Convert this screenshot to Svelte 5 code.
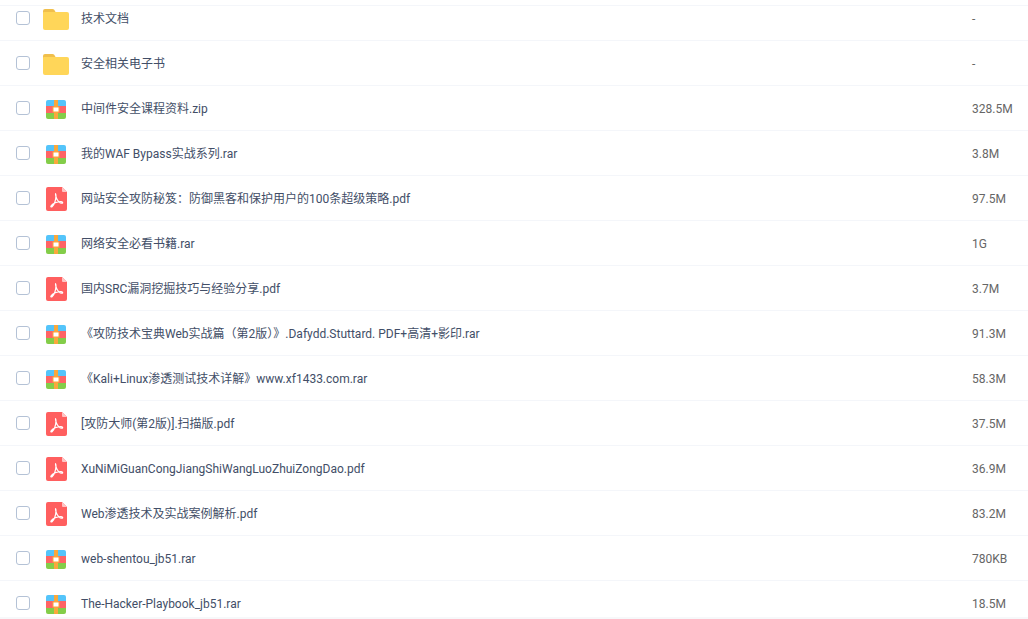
<script>
  const files = [
    { name: '技术文档', size: '-', type: 'folder' },
    { name: '安全相关电子书', size: '-', type: 'folder' },
    { name: '中间件安全课程资料.zip', size: '328.5M', type: 'zip' },
    { name: '我的WAF Bypass实战系列.rar', size: '3.8M', type: 'zip' },
    { name: '网站安全攻防秘笈：防御黑客和保护用户的100条超级策略.pdf', size: '97.5M', type: 'pdf' },
    { name: '网络安全必看书籍.rar', size: '1G', type: 'zip' },
    { name: '国内SRC漏洞挖掘技巧与经验分享.pdf', size: '3.7M', type: 'pdf' },
    { name: '《攻防技术宝典Web实战篇（第2版）》.Dafydd.Stuttard. PDF+高清+影印.rar', size: '91.3M', type: 'zip' },
    { name: '《Kali+Linux渗透测试技术详解》www.xf1433.com.rar', size: '58.3M', type: 'zip' },
    { name: '[攻防大师(第2版)].扫描版.pdf', size: '37.5M', type: 'pdf' },
    { name: 'XuNiMiGuanCongJiangShiWangLuoZhuiZongDao.pdf', size: '36.9M', type: 'pdf' },
    { name: 'Web渗透技术及实战案例解析.pdf', size: '83.2M', type: 'pdf' },
    { name: 'web-shentou_jb51.rar', size: '780KB', type: 'zip' },
    { name: 'The-Hacker-Playbook_jb51.rar', size: '18.5M', type: 'zip' }
  ];
</script>

<div class="page">
  <div class="top-edge"></div>
  <ul class="list">
    {#each files as file}
      <li class="row">
        <span class="check"></span>
        <span class="icon {file.type}">
          {#if file.type === 'folder'}
            <svg width="26" height="21" viewBox="0 0 26 21">
              <path d="M0 2a2 2 0 0 1 2-2h7a3 3 0 0 1 3 2l.5 1H12v2H0z" fill="#f0bf4c" />
              <path d="M0 4a1 1 0 0 1 1-1h23a2 2 0 0 1 2 2v14a2 2 0 0 1-2 2H2a2 2 0 0 1-2-2z" fill="#ffd659" />
            </svg>
          {:else if file.type === 'zip'}
            <svg width="20" height="19" viewBox="0 0 20 19">
              <path d="M0 6V2a2 2 0 0 1 2-2h16a2 2 0 0 1 2 2v4z" fill="#54c4fa" />
              <rect x="0" y="6" width="20" height="7" fill="#ff6464" />
              <path d="M0 13h20v4a2 2 0 0 1-2 2H2a2 2 0 0 1-2-2z" fill="#83cd49" />
              <rect x="8" y="0" width="4" height="19" fill="#f9a83c" />
              <rect x="7" y="7" width="6" height="5" fill="#fff" stroke="#f9a83c" stroke-width="1" />
            </svg>
          {:else}
            <svg width="21" height="24" viewBox="0 0 21 24">
              <path d="M2 0h14l5 5v17a2 2 0 0 1-2 2H2a2 2 0 0 1-2-2V2a2 2 0 0 1 2-2z" fill="#ff5f5f" />
              <path d="M16 0l5 5h-4a1 1 0 0 1-1-1z" fill="#ffc4c4" />
              <path d="M10 6.500c-.8 0-.5 2.800 1 5.800 1.300 2.500 3.400 4.100 5 3.900 1.200-.2.700-1.500-1.200-1.500-3 0-8.300 1.300-9.800 4.300-.5 1 .5 1.200 1.200.5 2.100-2.100 3.600-5.900 3.800-10.600 0-1.400-.1-2.400-.6-2.400z" fill="none" stroke="#fff" stroke-width="1.200" />
            </svg>
          {/if}
        </span>
        <span class="name">{file.name}</span>
        <span class="size">{file.size}</span>
      </li>
    {/each}
  </ul>
  <div class="bottom-edge"></div>
</div>

<style>
  :global(body) {
    margin: 0;
    background: #fff;
  }

  .page {
    position: relative;
    height: 619px;
    overflow: hidden;
    font-family: Roboto, "Noto Sans CJK SC", sans-serif;
    font-size: 12px;
    line-height: 20px;
  }

  .top-edge {
    position: absolute;
    top: 0;
    left: 0;
    right: 0;
    height: 5px;
    background: #fff;
    border-bottom: 1px solid #f4f6fa;
    z-index: 1;
  }

  .bottom-edge {
    position: absolute;
    top: 617px;
    left: 0;
    right: 0;
    bottom: 0;
    background: #f7f8fa;
    z-index: 1;
  }

  .list {
    list-style: none;
    margin: -4px 0 0;
    padding: 0;
  }

  .row {
    display: flex;
    align-items: center;
    height: 44px;
    border-bottom: 1px solid #f4f6fa;
  }

  .check {
    box-sizing: border-box;
    width: 14px;
    height: 14px;
    margin-left: 16px;
    border: 1px solid #b4c2d6;
    border-radius: 3px;
  }

  .icon {
    display: flex;
    justify-content: center;
    width: 26px;
    margin-left: 13px;
  }

  .icon svg {
    display: block;
  }

  .icon.folder,
  .icon.pdf {
    margin-top: 2px;
  }

  .icon.zip {
    margin-top: 3px;
  }

  .name {
    flex: 1;
    margin-left: 12px;
    padding-top: 2px;
    color: #424e67;
  }

  .size {
    width: 56px;
    padding-top: 2px;
    color: #666;
  }
</style>
